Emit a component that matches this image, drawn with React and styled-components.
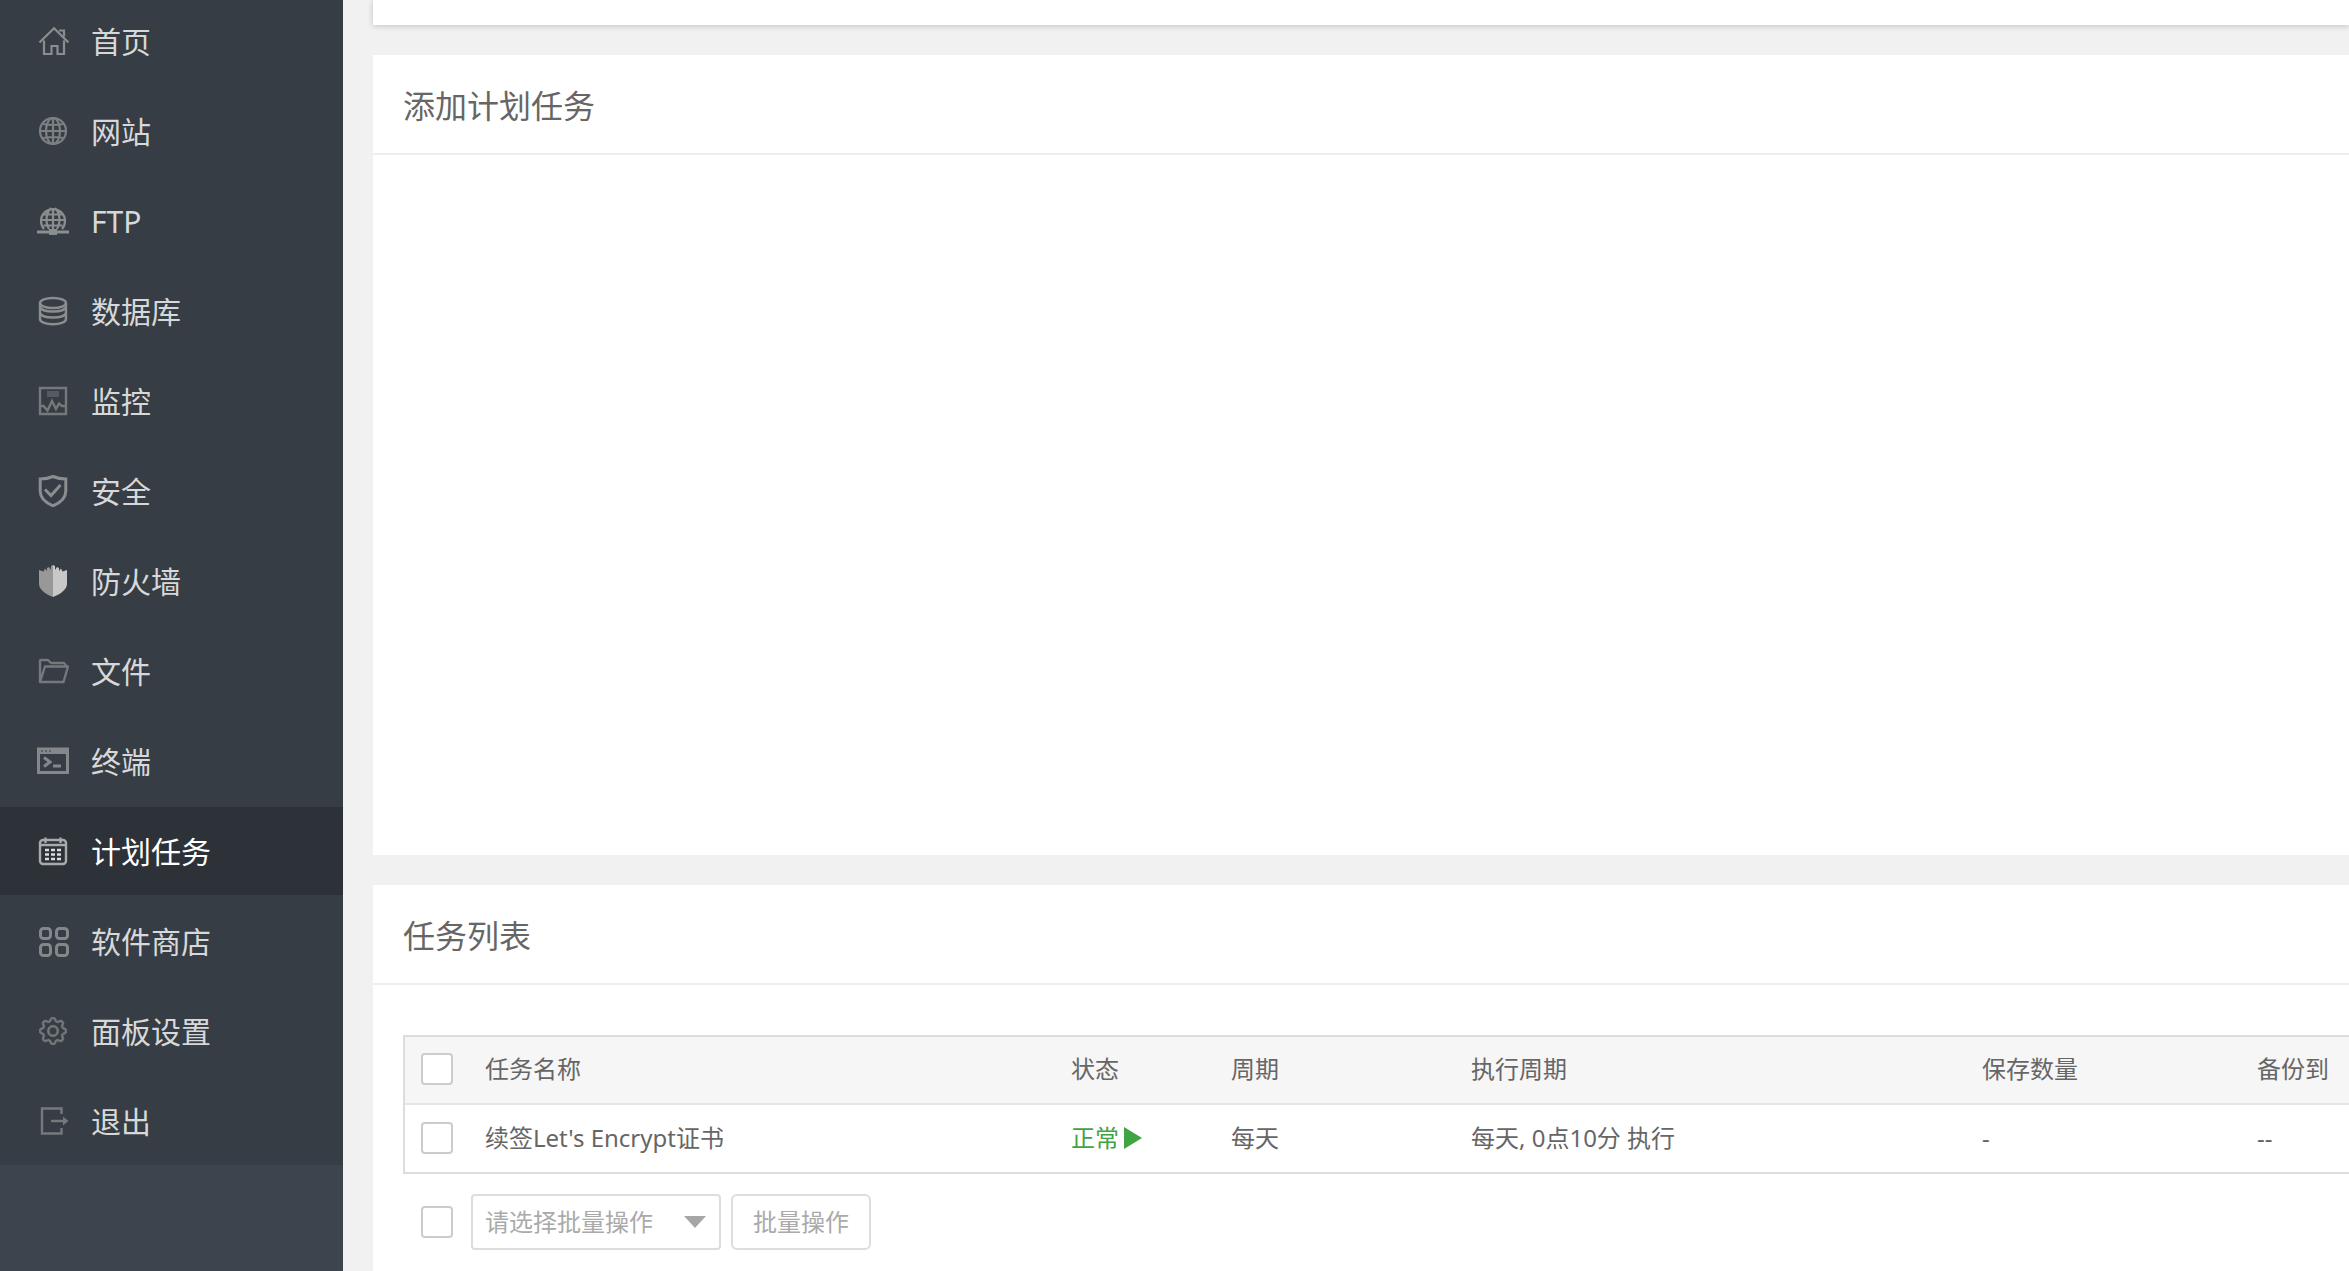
import React, { useState } from 'react';
import styled, { createGlobalStyle } from 'styled-components';
import { BsGear } from 'react-icons/bs';

const GlobalStyle = createGlobalStyle`
  * {
    box-sizing: border-box;
  }

  body {
    margin: 0;
    background-color: #f1f1f1;
    color: #666;
    font-family: 'Noto Sans', 'Noto Sans CJK SC', sans-serif;
    font-size: 24px;
    line-height: 34px;
  }

  button, select {
    font: inherit;
  }
`;

const Page = styled.div`
  display: flex;
  min-height: 100vh;
  overflow: hidden;
`;

const Sidebar = styled.nav`
  flex: 0 0 343px;
  background-color: #3d444d;
`;

const Menu = styled.ul`
  display: flex;
  flex-direction: column;
  gap: 2px;
  margin: -3px 0 0;
  padding: 0;
  background-color: #373d44;
  list-style: none;
`;

const MenuLink = styled.a`
  display: flex;
  align-items: center;
  gap: 22px;
  height: 88px;
  padding-left: 37px;
  background-color: ${({ $active }) => ($active ? '#2d3138' : 'transparent')};
  color: ${({ $active }) => ($active ? '#fff' : '#d7d8d9')};
  font-size: 30px;
  text-decoration: none;

  svg {
    flex: none;
    color: ${({ $tone }) => $tone || '#8b8e8f'};
  }
`;

const MenuText = styled.span`
  padding-top: 2px;
`;

const Main = styled.main`
  display: flex;
  flex: 1;
  flex-direction: column;
  gap: 30px;
  min-width: 0;
  padding-left: 30px;
`;

const TopBar = styled.div`
  flex: 0 0 25px;
  background-color: white;
  box-shadow: 0 1px 6px rgba(0, 0, 0, 0.2);
`;

const Card = styled.section`
  display: flex;
  flex-direction: column;
  flex: ${({ $fill }) => ($fill ? '1' : 'none')};
  background-color: white;
`;

const CardTitle = styled.h2`
  margin: 0;
  padding: 27px 30px 23px;
  border-bottom: 2px solid #eee;
  font-size: 32px;
  font-weight: 400;
  line-height: 48px;
`;

const AddTaskBody = styled.div`
  min-height: 700px;
`;

const ListBody = styled.div`
  padding: 50px 0 20px 30px;
`;

const TaskTable = styled.table`
  width: 100%;
  table-layout: fixed;
  border: 2px solid #ddd;
  border-right: 0;
  border-spacing: 0;

  th, td {
    height: 67px;
    padding: 0 16px 2px;
    font-weight: 400;
    text-align: left;
    vertical-align: middle;
    white-space: nowrap;
  }

  th {
    height: 68px;
    background-color: #f6f6f6;
    border-bottom: 2px solid #e6e6e6;
  }
`;

const Col = styled.col`
  width: ${({ $width }) => $width || 'auto'};
`;

const Checkbox = styled.input.attrs({ type: 'checkbox' })`
  display: block;
  flex: none;
  width: 32px;
  height: 32px;
  margin: 0;
  appearance: none;
  background-color: white;
  border: 2px solid #ccc;
  border-radius: 4px;
  cursor: pointer;

  &:checked {
    background-color: #3fa443;
    border-color: #3fa443;
  }
`;

const StatusButton = styled.button`
  display: flex;
  align-items: center;
  gap: 5px;
  padding: 0;
  background: none;
  border: 0;
  color: #3fa443;
  cursor: pointer;
`;

const BatchBar = styled.div`
  display: flex;
  align-items: center;
  gap: 10px;
  margin-top: 20px;
  padding-left: 18px;
`;

const SelectBox = styled.div`
  display: grid;
  align-items: center;
  width: 250px;
  margin-left: 8px;

  select, svg {
    grid-area: 1 / 1;
  }

  svg {
    justify-self: end;
    margin-right: 15px;
    pointer-events: none;
  }
`;

const BatchSelect = styled.select`
  width: 100%;
  height: 56px;
  padding: 0 12px;
  appearance: none;
  background-color: white;
  border: 2px solid #ddd;
  border-radius: 4px;
  color: #aaa;
`;

const BatchButton = styled.button`
  height: 56px;
  padding: 0 20px;
  background-color: white;
  border: 2px solid #ddd;
  border-radius: 6px;
  color: #aaa;
`;

const Icon = ({ children, width = 2.4 }) => (
  <svg
    width="32"
    height="32"
    viewBox="0 0 32 32"
    fill="none"
    stroke="currentColor"
    strokeWidth={width}
    aria-hidden="true"
  >
    {children}
  </svg>
);

const HomeIcon = () => (
  <Icon width={2.2}>
    <path d="M2.5 17.5 17 3.2l14.5 14.3M7 15.5V29h7.5v-8h6v8H27V15.5M22 5.5h5v6" />
  </Icon>
);

const GlobeIcon = () => (
  <Icon width={2.2}>
    <circle cx="16" cy="16" r="13" />
    <ellipse cx="16" cy="16" rx="7" ry="13" />
    <path d="M16 3v26M3 16h26M6 9q10 2 20 0M6 23q10-2 20 0" />
  </Icon>
);

const FtpIcon = () => (
  <Icon width={2.2}>
    <path d="M7 24a12 12 0 1 1 18 0M12 24C8 17 9 8 14 3M20 24c4-7 3-16-2-21M16 3v21M4 15h24M6.5 9.5h19M6.5 20.5h19" />
    <path d="M0 27h32" strokeWidth="3" />
    <path d="M12 27h8" strokeWidth="6" />
  </Icon>
);

const DatabaseIcon = () => (
  <Icon>
    <ellipse cx="16" cy="8" rx="13" ry="5" />
    <path d="M3 8v16c0 7 26 7 26 0V8M3 12c2 6 24 6 26 0M3 18c2 6 24 6 26 0" />
  </Icon>
);

const MonitorIcon = () => (
  <Icon>
    <path d="M3 3h26v26H3z" />
    <path d="M10 7.5h12M10 10.5h12" strokeWidth="3" opacity="0.5" />
    <path d="M3.5 21h3l4 4.5L15 16l4 8 3-5.5 3 2.5h5" />
  </Icon>
);

const ShieldIcon = () => (
  <Icon width={3}>
    <path d="M16 1.5C12 3.2 7 4 3.2 4v12c0 7 5 11.5 12.8 14.8C23.8 27.5 28.8 23 28.8 16V4C25 4 20 3.2 16 1.5z" />
    <path d="M8 14.5l6 6L23.5 10" />
  </Icon>
);

const FirewallIcon = () => (
  <svg width="32" height="32" viewBox="0 0 32 32" aria-hidden="true">
    <path fill="#989898" d="M16 0l-2 1v4l-2-3-2 1v3L8 3.500 6.500 6.500 2 5v14c0 5 6 10 14 13z" />
    <path fill="#c8c8c8" d="M16 0l2 1v4l2-3 2 1v3l2-2.500 1.500 3L30 5v14c0 5-6 10-14 13z" />
  </svg>
);

const FolderIcon = () => (
  <Icon>
    <path d="M3 27V6q0-1 1-1h7l3 3h13l2.5 3M3 27 8 11.5h23L26.5 27z" strokeLinejoin="round" />
  </Icon>
);

const TerminalIcon = () => (
  <Icon width={3}>
    <path d="M1.5 4h29v23.5h-29z" />
    <path d="M1 6h30" strokeWidth="6" />
    <path d="M4 6h2M8 6h2M12 6h2" stroke="#5d6266" strokeWidth="2" />
    <path d="M7 12.500l6 4.500-6 4.500M16 21h8" />
  </Icon>
);

const CalendarIcon = () => (
  <Icon>
    <rect x="3" y="5" width="26" height="24" rx="3" />
    <path d="M3 10h26M8.500 2.500V8M23.500 2.500V8" />
    <path
      d="M8 15h4M14 15h4M20 15h4M8 19.500h4M14 19.500h4M20 19.500h4M8 24h4M14 24h4M20 24h4"
      stroke="#dcdcdc"
      strokeWidth="2.5"
    />
  </Icon>
);

const StoreIcon = () => (
  <Icon width={3}>
    <rect x="3.5" y="3.5" width="10" height="10" rx="3" />
    <rect x="19.5" y="3.5" width="11" height="10" rx="3" />
    <rect x="3.5" y="19.5" width="10" height="11" rx="3" />
    <rect x="19.5" y="19.5" width="11" height="11" rx="3" />
  </Icon>
);

const GearIcon = () => (
  <Icon>
    <BsGear x="2" y="2" size={28} stroke="currentColor" strokeWidth="0.4" />
  </Icon>
);

const ExitIcon = () => (
  <Icon>
    <path d="M24.5 9V3.5H5v25h19.5V23M14 16h13" />
    <path d="M26 11.5l5.5 4.500-5.500 4.500z" fill="currentColor" stroke="none" />
  </Icon>
);

const menu = [
  { name: '首页', icon: HomeIcon },
  { name: '网站', icon: GlobeIcon, tone: '#7c8083' },
  { name: 'FTP', icon: FtpIcon },
  { name: '数据库', icon: DatabaseIcon },
  { name: '监控', icon: MonitorIcon, tone: '#74797c' },
  { name: '安全', icon: ShieldIcon },
  { name: '防火墙', icon: FirewallIcon },
  { name: '文件', icon: FolderIcon, tone: '#74797c' },
  { name: '终端', icon: TerminalIcon, tone: '#84888a' },
  { name: '计划任务', icon: CalendarIcon, active: true, tone: '#a8aaac' },
  { name: '软件商店', icon: StoreIcon, tone: '#84888a' },
  { name: '面板设置', icon: GearIcon, tone: '#74797c' },
  { name: '退出', icon: ExitIcon, tone: '#74797c' },
];

const tasks = [
  {
    id: 1,
    name: "续签Let's Encrypt证书",
    status: '正常',
    type: '每天',
    cycle: '每天, 0点10分 执行',
    save: '-',
    backupTo: '--',
  },
];

const App = () => {
  const [selected, setSelected] = useState([]);
  const allSelected = selected.length === tasks.length;

  const toggleAll = () => {
    setSelected(allSelected ? [] : tasks.map((task) => task.id));
  };

  const toggleTask = (id) => {
    setSelected(selected.includes(id) ? selected.filter((item) => item !== id) : [...selected, id]);
  };

  return (
    <>
      <GlobalStyle />
      <Page>
        <Sidebar>
          <Menu>
            {menu.map(({ name, icon: MenuIcon, active, tone }) => (
              <li key={name}>
                <MenuLink href="#" $active={active} $tone={tone}>
                  <MenuIcon />
                  <MenuText>{name}</MenuText>
                </MenuLink>
              </li>
            ))}
          </Menu>
        </Sidebar>

        <Main>
          <TopBar />

          <Card>
            <CardTitle>添加计划任务</CardTitle>
            <AddTaskBody />
          </Card>

          <Card $fill>
            <CardTitle>任务列表</CardTitle>
            <ListBody>
              <TaskTable>
                <colgroup>
                  <Col $width="64px" />
                  <Col />
                  <Col $width="160px" />
                  <Col $width="240px" />
                  <Col $width="511px" />
                  <Col $width="275px" />
                  <Col $width="108px" />
                </colgroup>
                <thead>
                  <tr>
                    <th>
                      <Checkbox aria-label="全选" checked={allSelected} onChange={toggleAll} />
                    </th>
                    <th>任务名称</th>
                    <th>状态</th>
                    <th>周期</th>
                    <th>执行周期</th>
                    <th>保存数量</th>
                    <th>备份到</th>
                  </tr>
                </thead>
                <tbody>
                  {tasks.map((task) => (
                    <tr key={task.id}>
                      <td>
                        <Checkbox
                          aria-label={task.name}
                          checked={selected.includes(task.id)}
                          onChange={() => toggleTask(task.id)}
                        />
                      </td>
                      <td>{task.name}</td>
                      <td>
                        <StatusButton>
                          {task.status}
                          <svg width="18" height="22" viewBox="0 0 18 22" fill="currentColor" aria-hidden="true">
                            <path d="M0 0l18 11L0 22z" />
                          </svg>
                        </StatusButton>
                      </td>
                      <td>{task.type}</td>
                      <td>{task.cycle}</td>
                      <td>{task.save}</td>
                      <td>{task.backupTo}</td>
                    </tr>
                  ))}
                </tbody>
              </TaskTable>

              <BatchBar>
                <Checkbox aria-label="全选" checked={allSelected} onChange={toggleAll} />
                <SelectBox>
                  <BatchSelect aria-label="批量操作">
                    <option>请选择批量操作</option>
                  </BatchSelect>
                  <svg width="22" height="12" viewBox="0 0 22 12" fill="#a6a6a6" aria-hidden="true">
                    <path d="M0 0h22L11 12z" />
                  </svg>
                </SelectBox>
                <BatchButton>批量操作</BatchButton>
              </BatchBar>
            </ListBody>
          </Card>
        </Main>
      </Page>
    </>
  );
};

export default App;
